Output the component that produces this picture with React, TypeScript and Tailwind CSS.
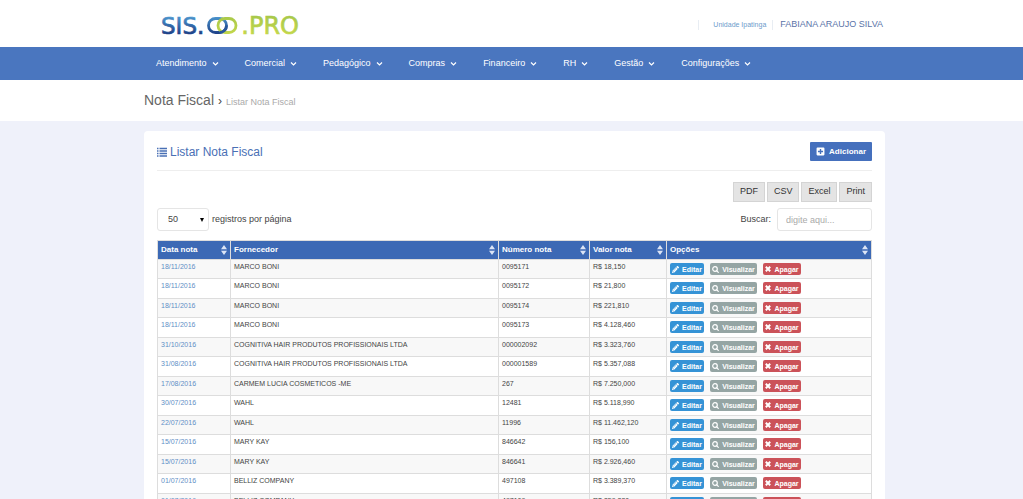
import { FaPencilAlt, FaPlusSquare } from "react-icons/fa";

interface Invoice {
  date: string;
  supplier: string;
  number: string;
  value: string;
}

const menuItems = ["Atendimento", "Comercial", "Pedagógico", "Compras", "Financeiro", "RH", "Gestão", "Configurações"];

const exportFormats = ["PDF", "CSV", "Excel", "Print"];

const columns = [
  { label: "Data nota", width: "w-[73px]" },
  { label: "Fornecedor", width: "" },
  { label: "Número nota", width: "w-[91px]" },
  { label: "Valor nota", width: "w-[77px]" },
  { label: "Opções", width: "w-[205px]" },
];

const invoices: Invoice[] = [
  { date: "18/11/2016", supplier: "MARCO BONI", number: "0095171", value: "R$ 18,150" },
  { date: "18/11/2016", supplier: "MARCO BONI", number: "0095172", value: "R$ 21,800" },
  { date: "18/11/2016", supplier: "MARCO BONI", number: "0095174", value: "R$ 221,810" },
  { date: "18/11/2016", supplier: "MARCO BONI", number: "0095173", value: "R$ 4.128,460" },
  { date: "31/10/2016", supplier: "COGNITIVA HAIR PRODUTOS PROFISSIONAIS LTDA", number: "000002092", value: "R$ 3.323,760" },
  { date: "31/08/2016", supplier: "COGNITIVA HAIR PRODUTOS PROFISSIONAIS LTDA", number: "000001589", value: "R$ 5.357,088" },
  { date: "17/08/2016", supplier: "CARMEM LUCIA COSMETICOS -ME", number: "267", value: "R$ 7.250,000" },
  { date: "30/07/2016", supplier: "WAHL", number: "12481", value: "R$ 5.118,990" },
  { date: "22/07/2016", supplier: "WAHL", number: "11996", value: "R$ 11.462,120" },
  { date: "15/07/2016", supplier: "MARY KAY", number: "846642", value: "R$ 156,100" },
  { date: "15/07/2016", supplier: "MARY KAY", number: "846641", value: "R$ 2.926,460" },
  { date: "01/07/2016", supplier: "BELLIZ COMPANY", number: "497108", value: "R$ 3.389,370" },
  { date: "01/07/2016", supplier: "BELLIZ COMPANY", number: "497109", value: "R$ 359,280" },
];

function Logo() {
  return (
    <svg width="142" height="30" viewBox="-1 -5 142 30" role="img" aria-label="SIS.OO.PRO">
      <defs>
        <linearGradient id="blue" x1="0" y1="2" x2="0" y2="19" gradientUnits="userSpaceOnUse">
          <stop offset="0" stopColor="#4a93cc" />
          <stop offset="1" stopColor="#1c3f86" />
        </linearGradient>
        <linearGradient id="green" x1="0" y1="2" x2="0" y2="19" gradientUnits="userSpaceOnUse">
          <stop offset="0" stopColor="#a9c94a" />
          <stop offset="1" stopColor="#c3d74b" />
        </linearGradient>
      </defs>
      <g fontSize="23" fontFamily="DejaVu Sans, sans-serif" strokeWidth="0.7">
        <text x="-1" y="19" fill="url(#blue)" stroke="url(#blue)">
          SIS.
        </text>
        <text x="137" y="19" textAnchor="end" fontSize="24" fill="url(#green)" stroke="url(#green)">
          .PRO
        </text>
      </g>
      <g fill="none" strokeWidth="2.8">
        <rect x="46.500" y="3.500" width="18" height="14" rx="7" stroke="url(#blue)" />
        <rect x="56" y="3.500" width="18" height="14" rx="7" stroke="url(#green)" />
        <path d="M57.500 17.500a7 7 0 0 0 7-7" stroke="#27569b" />
      </g>
    </svg>
  );
}

function ListIcon() {
  return (
    <svg width="10" height="10" viewBox="0 0 10 10" stroke="currentColor" strokeWidth="1.4">
      <path d="M0 1.500h1.500M0 4h1.500M0 6.500h1.500M0 9h1.500M2.500 1.500H10M2.500 4H10M2.500 6.500H10M2.500 9H10" />
    </svg>
  );
}

function SearchIcon() {
  return (
    <svg width="7" height="7" viewBox="0 0 14 14" fill="none" stroke="currentColor" strokeWidth="2.4" strokeLinecap="round">
      <circle cx="6" cy="6" r="4.600" />
      <path d="M9.600 9.600 12.600 12.600" />
    </svg>
  );
}

function TimesIcon() {
  return (
    <svg width="6" height="6" viewBox="0 0 6 6" stroke="currentColor" strokeWidth="2">
      <path d="M.8.8 5.200 5.200M5.200.8.8 5.200" />
    </svg>
  );
}

function SortIcon() {
  return (
    <svg width="6" height="10" viewBox="0 0 6 10" className="shrink-0 fill-[#dbe4f5]">
      <path d="M3 0 6 4.300H0zM3 10 0 5.700h6z" />
    </svg>
  );
}

function RowActions() {
  const base = "flex h-3 items-center justify-center gap-[3px] rounded-[2px] text-[7px] font-bold leading-none text-white";
  return (
    <div className="flex gap-[6px]">
      <button type="button" className={`${base} w-[34px] bg-[#3593d6]`}>
        <FaPencilAlt className="size-[7px]" />
        Editar
      </button>
      <button type="button" className={`${base} w-[47px] bg-[#95a5a4]`}>
        <SearchIcon />
        Visualizar
      </button>
      <button type="button" className={`${base} w-[38px] bg-[#cb5259]`}>
        <TimesIcon />
        Apagar
      </button>
    </div>
  );
}

export default function App() {
  return (
    <div className="min-h-screen bg-[#eff1fa] font-['Liberation_Sans',Arial,sans-serif] text-[9px] text-[#444]">
      <header className="bg-white pl-[6px]">
        <div className="mx-auto flex h-[47px] max-w-[741px] items-center justify-between pl-[17px] pr-[2px] pt-[3px]">
          <a href="#inicio">
            <Logo />
          </a>
          <div className="flex items-center text-[#5a73a8]">
            <a href="#unidade" className="border-x border-[#e8edf3] px-[6px] pl-[14px] text-[7px] text-[#6d9bcb]">
              Unidade Ipatinga
            </a>
            <a href="#perfil" className="pl-[7px]">
              FABIANA ARAUJO SILVA
            </a>
          </div>
        </div>
      </header>

      <nav className="bg-[#4a76bf] pl-[6px]">
        <ul className="mx-auto flex h-[33px] max-w-[741px] items-center gap-[26px] px-3 pt-px">
          {menuItems.map((item) => (
            <li key={item}>
              <a href="#menu" className="flex items-center gap-[5px] text-white">
                {item}
                <svg width="7" height="6" viewBox="0 0 7 6" fill="none" stroke="currentColor" strokeWidth="1.2">
                  <path d="M1 1.500 3.500 4 6 1.500" />
                </svg>
              </a>
            </li>
          ))}
        </ul>
      </nav>

      <div className="bg-white pl-[6px]">
        <div className="mx-auto flex h-[41px] max-w-[741px] items-baseline gap-1 pt-[10px]">
          <h1 className="text-[14px] leading-5 text-[#666]">Nota Fiscal</h1>
          <span className="text-[12px] leading-5">›</span>
          <span className="text-[#aaa]">Listar Nota Fiscal</span>
        </div>
      </div>

      <main className="pl-[6px] pt-[10px]">
        <section className="mx-auto max-w-[741px] rounded-t-sm bg-white px-[13px] pt-[11px]">
          <div className="flex items-center justify-between border-b border-[#eee] pb-[9px]">
            <h2 className="flex items-center gap-[3px] text-[12px] leading-4 text-[#4a70b5]">
              <ListIcon />
              Listar Nota Fiscal
            </h2>
            <button
              type="button"
              className="flex h-[19px] items-center gap-1 rounded-[1px] bg-[#4570bd] px-[6px] text-[8px] font-bold text-white"
            >
              <FaPlusSquare className="size-[9px]" />
              Adicionar
            </button>
          </div>

          <div className="flex justify-end gap-[2px] pt-[11px]">
            {exportFormats.map((format) => (
              <button key={format} type="button" className="h-5 border border-[#d4d4d4] bg-[#e4e4e4] px-[6px] text-[#333]">
                {format}
              </button>
            ))}
          </div>

          <div className="flex items-center justify-between py-[6px] pb-[9px]">
            <label className="flex items-center gap-[3px]">
              <span className="relative">
                <select className="h-[23px] w-[52px] appearance-none rounded-[3px] border border-[#e5e5e5] bg-white pl-[10px]" defaultValue="50">
                  <option>10</option>
                  <option>25</option>
                  <option>50</option>
                  <option>100</option>
                </select>
                <svg width="4" height="4" viewBox="0 0 4 4" className="pointer-events-none absolute right-[5px] top-[10px] fill-black">
                  <path d="M0 0h4L2 4z" />
                </svg>
              </span>
              registros por página
            </label>
            <label className="flex items-center gap-[6px]">
              Buscar:
              <input
                type="search"
                placeholder="digite aqui..."
                className="h-[23px] w-[95px] rounded-[3px] border border-[#e5e5e5] px-2 placeholder:text-[#aaa]"
              />
            </label>
          </div>

          <table className="w-full table-fixed border-collapse border border-[#ddd] text-[7px]">
            <thead>
              <tr className="h-[19px] bg-[#3c69b5] text-left text-[8px] text-white">
                {columns.map(({ label, width }) => (
                  <th key={label} className={`border-x border-[#ddd] px-[3px] py-0 ${width}`}>
                    <div className="flex items-center justify-between leading-[10px]">
                      {label}
                      <SortIcon />
                    </div>
                  </th>
                ))}
              </tr>
            </thead>
            <tbody className="leading-[10px]">
              {invoices.map((invoice) => (
                <tr key={invoice.number} className="align-top odd:h-[19px] odd:bg-[#f8f8f8] even:h-[20px]">
                  <td className="border border-[#ddd] px-[3px] pt-[2px]">
                    <a href="#nota" className="text-[#5f8fc6]">
                      {invoice.date}
                    </a>
                  </td>
                  <td className="border border-[#ddd] px-[3px] pt-[2px]">{invoice.supplier}</td>
                  <td className="border border-[#ddd] px-[3px] pt-[2px]">{invoice.number}</td>
                  <td className="border border-[#ddd] px-[3px] pt-[2px]">{invoice.value}</td>
                  <td className="border border-[#ddd] px-[3px] pt-[3px]">
                    <RowActions />
                  </td>
                </tr>
              ))}
            </tbody>
          </table>
        </section>
      </main>
    </div>
  );
}
